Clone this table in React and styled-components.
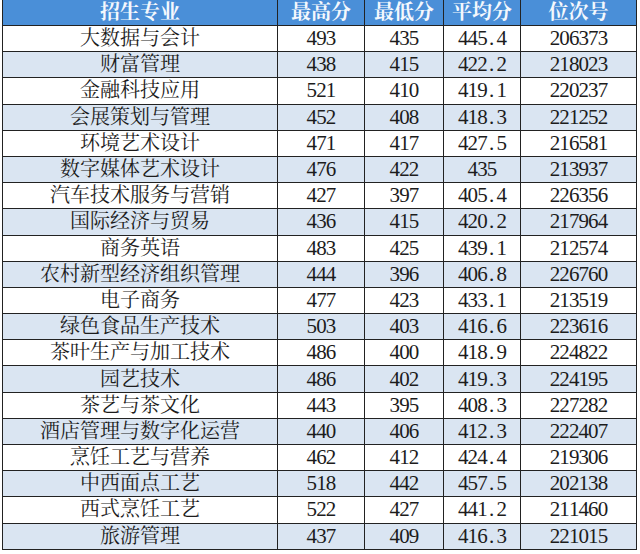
import React from 'react'
import styled, { createGlobalStyle } from 'styled-components'

const GlobalStyle = createGlobalStyle`
    body {
        margin: 0;
        background: #fff;
    }
`

const rows = [
    ['大数据与会计', '493', '435', '445.4', '206373'],
    ['财富管理', '438', '415', '422.2', '218023'],
    ['金融科技应用', '521', '410', '419.1', '220237'],
    ['会展策划与管理', '452', '408', '418.3', '221252'],
    ['环境艺术设计', '471', '417', '427.5', '216581'],
    ['数字媒体艺术设计', '476', '422', '435', '213937'],
    ['汽车技术服务与营销', '427', '397', '405.4', '226356'],
    ['国际经济与贸易', '436', '415', '420.2', '217964'],
    ['商务英语', '483', '425', '439.1', '212574'],
    ['农村新型经济组织管理', '444', '396', '406.8', '226760'],
    ['电子商务', '477', '423', '433.1', '213519'],
    ['绿色食品生产技术', '503', '403', '416.6', '223616'],
    ['茶叶生产与加工技术', '486', '400', '418.9', '224822'],
    ['园艺技术', '486', '402', '419.3', '224195'],
    ['茶艺与茶文化', '443', '395', '408.3', '227282'],
    ['酒店管理与数字化运营', '440', '406', '412.3', '222407'],
    ['烹饪工艺与营养', '462', '412', '424.4', '219306'],
    ['中西面点工艺', '518', '442', '457.5', '202138'],
    ['西式烹饪工艺', '522', '427', '441.2', '211460'],
    ['旅游管理', '437', '409', '416.3', '221015'],
]

const headers = ['招生专业', '最高分', '最低分', '平均分', '位次号']
const widths = [275, 87, 79, 77, 116]

// SimSun style digits: every char gets the same cell, the dot too
const Num = ({ value }) => (
    <NumWrap>
        {value.split('').map((c, i) => <Digit key={i}>{c}</Digit>)}
    </NumWrap>
)

const App = () => {
    return (<>
        <GlobalStyle />
        <Page>
            <Table>
                <colgroup>
                    {widths.map((w, i) => <col key={i} style={{ width: w }} />)}
                </colgroup>
                <thead>
                    <tr>
                        {headers.map(h => <HeadCell key={h}>{h}</HeadCell>)}
                    </tr>
                </thead>
                <tbody>
                    {rows.map((r, i) => (
                        <Row key={r[0]} $shaded={i % 2 === 1}>
                            <Cell>{r[0]}</Cell>
                            {r.slice(1).map((v, j) => <Cell key={j}><Num value={v} /></Cell>)}
                        </Row>
                    ))}
                </tbody>
            </Table>
        </Page>
    </>)
}

export default App


const Page = styled.div`
    width: 640px;
    height: 554px;
    overflow: hidden;
    padding-left: 2px;
    box-sizing: border-box;
`

const Table = styled.table`
    width: 634px;
    table-layout: fixed;
    border-collapse: collapse;
    font-family: "Liberation Serif", "Noto Serif CJK SC", "Noto Sans CJK SC", serif;
    color: #1c1c1c;
`

const HeadCell = styled.th`
    height: 25px;
    padding: 0;
    background: #4a8fd8;
    color: #f4f8fd;
    font-size: 20px;
    font-weight: 700;
    text-align: center;
    border: 1px solid #222;
    border-top: none;
    line-height: 25px;
`

const Row = styled.tr`
    background: ${p => p.$shaded ? '#dae5f2' : '#fff'};
`

const Cell = styled.td`
    height: 25.2px;
    padding: 0;
    text-align: center;
    font-size: 20px;
    line-height: 25px;
    border: 1px solid #222;
`

const NumWrap = styled.span`
    display: inline-flex;
    font-size: 21px;
`

const Digit = styled.span`
    display: inline-block;
    width: 9.6px;
    text-align: center;
`
